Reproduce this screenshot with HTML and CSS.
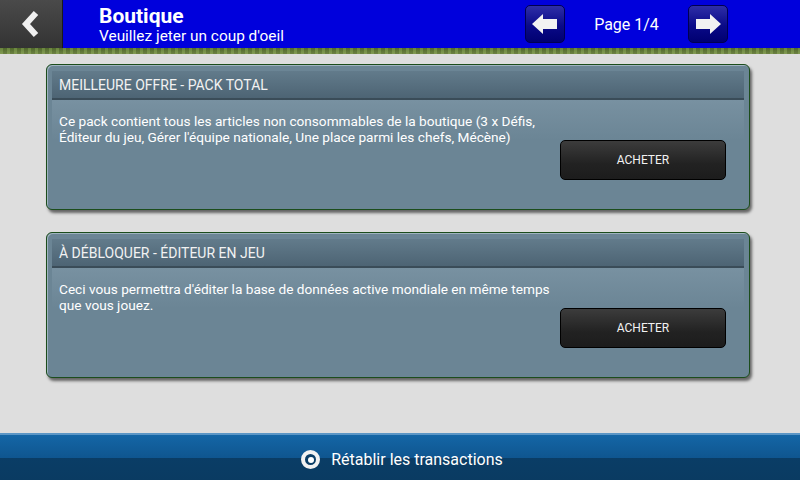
FILE: index.html
```html
<!DOCTYPE html>
<html lang="fr">
<head>
    <meta charset="UTF-8">
    <title>Boutique</title>
    <link rel="stylesheet" href="styles.css">
</head>
<body>
    <div class="screen">
        <div class="topbar">
            <div class="back-btn">
                <svg width="24" height="28" viewBox="0 0 24 28">
                    <path d="M17 3 L7 14 L17 25" fill="none" stroke="#f0f0f0" stroke-width="6" stroke-linejoin="miter"/>
                </svg>
            </div>
            <div class="titles">
                <h1>Boutique</h1>
                <p>Veuillez jeter un coup d'oeil</p>
            </div>
            <div class="pager">
                <button class="nav-btn">
                    <svg width="28" height="22" viewBox="0 0 28 22">
                        <path d="M1 11 L12 1 L12 6 L26 6 L26 16 L12 16 L12 21 Z" fill="#f2f2f2"/>
                    </svg>
                </button>
                <span class="page-label">Page 1/4</span>
                <button class="nav-btn">
                    <svg width="28" height="22" viewBox="0 0 28 22">
                        <path d="M27 11 L16 1 L16 6 L2 6 L2 16 L16 16 L16 21 Z" fill="#f2f2f2"/>
                    </svg>
                </button>
            </div>
        </div>
        <div class="grass"></div>

        <div class="content">
            <div class="offer">
                <div class="offer-title">MEILLEURE OFFRE - PACK TOTAL</div>
                <div class="offer-body">
                    <p>Ce pack contient tous les articles non consommables de la boutique (3 x Défis, Éditeur du jeu, Gérer l'équipe nationale, Une place parmi les chefs, Mécène)</p>
                    <button class="buy-btn">ACHETER</button>
                </div>
            </div>

            <div class="offer">
                <div class="offer-title">À DÉBLOQUER - ÉDITEUR EN JEU</div>
                <div class="offer-body">
                    <p>Ceci vous permettra d'éditer la base de données active mondiale en même temps que vous jouez.</p>
                    <button class="buy-btn">ACHETER</button>
                </div>
            </div>
        </div>

        <div class="footer">
            <span class="radio"></span>
            <span>Rétablir les transactions</span>
        </div>
    </div>
</body>
</html>
```

FILE: styles.css
```css
* {
    margin: 0;
    padding: 0;
    box-sizing: border-box;
}

body {
    font-family: Roboto, "Liberation Sans", sans-serif;
    background: #dedede;
    width: 800px;
    height: 480px;
    overflow: hidden;
}

.screen {
    display: flex;
    flex-direction: column;
    height: 480px;
}

.topbar {
    height: 48px;
    background: #0000dc;
    display: flex;
    align-items: stretch;
}

.back-btn {
    width: 63px;
    background: linear-gradient(#4a4a4a, #333333);
    border-right: 1px solid #1a1a1a;
    display: flex;
    align-items: center;
    justify-content: center;
}

.titles {
    margin-left: 36px;
    color: #fff;
    padding-top: 5px;
}

.titles h1 {
    font-size: 21px;
    font-weight: bold;
    line-height: 22px;
}

.titles p {
    font-size: 15.4px;
    line-height: 18px;
}

.pager {
    margin-left: auto;
    margin-right: 72px;
    display: flex;
    align-items: center;
}

.nav-btn {
    width: 40px;
    height: 38px;
    border: 1px solid #000050;
    border-radius: 5px;
    background: linear-gradient(#2e2ea8, #0a0a88 55%, #000070);
    display: flex;
    align-items: center;
    justify-content: center;
}

.page-label {
    width: 123px;
    text-align: center;
    color: #fff;
    font-size: 16px;
}

.grass {
    height: 6px;
    background:
        repeating-linear-gradient(90deg, rgba(140, 170, 90, 0.35) 0 3px, rgba(60, 80, 30, 0.25) 3px 7px),
        linear-gradient(#56702e, #7d9350);
}

.content {
    flex: 1;
    padding: 10px 50px 0 46px;
    display: flex;
    flex-direction: column;
    gap: 22px;
}

.offer {
    height: 146px;
    background: #6b8595;
    border: 1px solid #1c4d1c;
    border-radius: 6px;
    box-shadow: inset 1px 1px 0 #9fb3bf, 2px 3px 3px rgba(0, 0, 0, 0.55);
    padding: 6px 5px;
}

.offer-title {
    height: 29px;
    background: linear-gradient(#627b8b, #4d6474);
    border-bottom: 2px solid #3a4c58;
    color: #f2f2f2;
    font-size: 14px;
    line-height: 28px;
    padding-left: 7px;
}

.offer-body {
    position: relative;
    height: 100px;
    background: linear-gradient(#7891a1, #6b8595 40%);
    padding: 13px 7px 0;
}

.offer-body p {
    width: 500px;
    color: #fff;
    font-size: 13.65px;
    line-height: 16px;
}

.buy-btn {
    position: absolute;
    right: 18px;
    top: 40px;
    width: 166px;
    height: 40px;
    border: 1px solid #000;
    border-radius: 5px;
    background: linear-gradient(#3c3c3c, #222 60%, #1c1c1c);
    color: #f2f2f2;
    font-family: inherit;
    font-size: 12px;
}

.footer {
    height: 47px;
    background: linear-gradient(#1466a6, #0f5690 50%, #0a3d66 51%, #0a3b62);
    border-top: 2px solid #5b96c6;
    display: flex;
    align-items: center;
    justify-content: center;
    gap: 11px;
    color: #fff;
    font-size: 16px;
    padding: 4px 0 0 4px;
}

.radio {
    width: 19px;
    height: 19px;
    border-radius: 50%;
    border: 4px solid #f2f2f2;
    background: #0a3d66;
    position: relative;
}

.radio::after {
    content: "";
    position: absolute;
    left: 2.5px;
    top: 2.5px;
    width: 6px;
    height: 6px;
    border-radius: 50%;
    background: #fff;
}
```
